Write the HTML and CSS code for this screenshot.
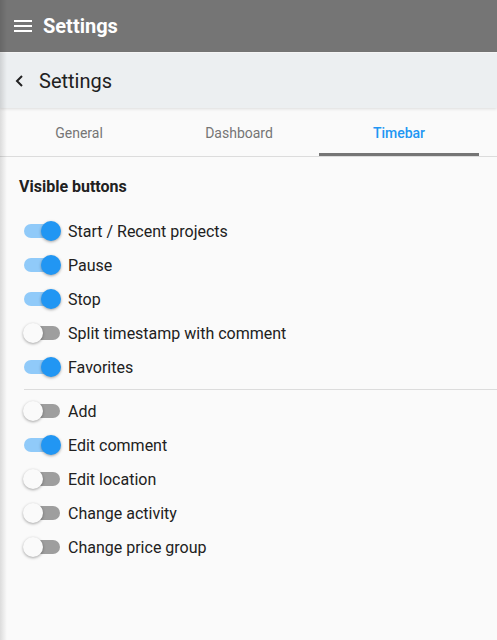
FILE: index.html
```html
<!DOCTYPE html>
<html>
<head>
<meta charset="utf-8">
<link rel="stylesheet" href="styles.css">
</head>
<body>
<div class="app">
  <header class="topbar">
    <svg class="menu" width="18" height="12" viewBox="0 0 18 12"><rect x="0" y="0" width="18" height="2" fill="#fff"/><rect x="0" y="5" width="18" height="2" fill="#fff"/><rect x="0" y="10" width="18" height="2" fill="#fff"/></svg>
    <span class="topbar-title">Settings</span>
  </header>
  <div class="subbar">
    <svg class="back" width="8" height="12" viewBox="0 0 8 12"><path d="M7 1 L2 6 L7 11" fill="none" stroke="#222" stroke-width="2"/></svg>
    <span class="subbar-title">Settings</span>
  </div>
  <nav class="tabs">
    <div class="tab">General</div>
    <div class="tab">Dashboard</div>
    <div class="tab active">Timebar</div>
  </nav>
  <main class="content">
    <h2 class="section">Visible buttons</h2>
    <ul class="list first">
      <li class="row"><span class="sw on"></span>Start / Recent projects</li>
      <li class="row"><span class="sw on"></span>Pause</li>
      <li class="row"><span class="sw on"></span>Stop</li>
      <li class="row"><span class="sw"></span>Split timestamp with comment</li>
      <li class="row"><span class="sw on"></span>Favorites</li>
    </ul>
    <hr class="divider">
    <ul class="list">
      <li class="row"><span class="sw"></span>Add</li>
      <li class="row"><span class="sw on"></span>Edit comment</li>
      <li class="row"><span class="sw"></span>Edit location</li>
      <li class="row"><span class="sw"></span>Change activity</li>
      <li class="row"><span class="sw"></span>Change price group</li>
    </ul>
  </main>
</div>
</body>
</html>
```

FILE: styles.css
```css
html, body {
  margin: 0;
  padding: 0;
  height: 100%;
}
body {
  font-family: Roboto, "Liberation Sans", sans-serif;
  background: #fafafa;
  color: #212121;
}
.app {
  min-height: 640px;
  position: relative;
  background: #fafafa;
}
.app::before {
  content: "";
  position: absolute;
  left: 0;
  top: 0;
  bottom: 0;
  width: 7px;
  background: linear-gradient(to right, rgba(0,0,0,0.12), rgba(0,0,0,0));
  z-index: 5;
  pointer-events: none;
}
.topbar {
  height: 52px;
  background: #757575;
  display: flex;
  align-items: center;
  padding-left: 14px;
  box-sizing: border-box;
}
.menu {
  display: block;
  margin-right: 11px;
}
.topbar-title {
  color: #fff;
  font-size: 20px;
  font-weight: 700;
  line-height: 1;
}
.subbar {
  height: 55px;
  margin-top: 1px;
  background: #eceff1;
  display: flex;
  align-items: center;
  padding-left: 15px;
  box-sizing: border-box;
  box-shadow: 0 1px 3px rgba(0,0,0,0.12);
  position: relative;
  z-index: 2;
}
.back {
  display: block;
  margin-right: 16px;
}
.subbar-title {
  font-size: 20px;
  color: #212121;
  line-height: 1;
}
.tabs {
  display: flex;
  height: 49px;
  border-bottom: 1px solid #dcdcdc;
  box-sizing: border-box;
  padding-left: 0;
  margin-left: -1px;
}
.tab {
  width: 160px;
  display: flex;
  align-items: center;
  justify-content: center;
  font-size: 14px;
  color: #757575;
  box-sizing: border-box;
  padding-top: 1px;
}
.tab.active {
  color: #2196f3;
  font-weight: 500;
  border-bottom: 3px solid #757575;
  padding-top: 4px;
}
.content {
  padding-top: 20px;
}
.section {
  margin: 0 0 0 19px;
  font-size: 16px;
  font-weight: 700;
  color: #212121;
  line-height: 20px;
}
.list {
  list-style: none;
  margin: 0;
  padding: 0 0 0 24px;
}
.list.first {
  margin-top: 17px;
}
.row {
  height: 34px;
  display: flex;
  align-items: center;
  font-size: 16px;
  color: #212121;
}
.sw {
  width: 36px;
  height: 14px;
  border-radius: 7px;
  background: #9e9e9e;
  position: relative;
  margin-right: 8px;
  flex: none;
}
.sw::after {
  content: "";
  position: absolute;
  top: -3px;
  left: -1px;
  width: 20px;
  height: 20px;
  border-radius: 50%;
  background: #fafafa;
  box-shadow: 0 1px 3px rgba(0,0,0,0.35);
}
.sw.on {
  background: #90caf9;
}
.sw.on::after {
  left: 17px;
  background: #2196f3;
}
.divider {
  margin: 5px 0 4px 24px;
  border: 0;
  border-top: 1px solid #dcdcdc;
  height: 0;
}
```
